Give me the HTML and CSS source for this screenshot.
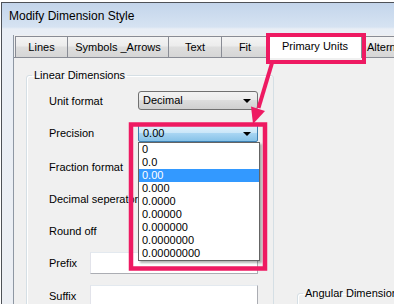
FILE: index.html
```html
<!DOCTYPE html>
<html lang="en">
<head>
    <meta charset="UTF-8">
    <meta name="viewport" content="width=device-width, initial-scale=1.0">
    <title>Modify Dimension Style</title>
    <link rel="stylesheet" href="styles.css">
</head>
<body>
    <div class="window">
        <div class="titlebar">Modify Dimension Style</div>
        <div class="frame">
            <div class="client">
                <div class="tabs">
                    <div class="tab tab-lines">Lines</div>
                    <div class="tab tab-symbols">Symbols _Arrows</div>
                    <div class="tab tab-text">Text</div>
                    <div class="tab tab-fit">Fit</div>
                    <div class="tab tab-primary active">Primary Units</div>
                    <div class="tab tab-alt">Alternate Units</div>
                </div>

                <div class="panel">
                    <fieldset class="group group-linear">
                        <legend>Linear Dimensions</legend>

                        <div class="row row-1">
                            <label class="lbl">Unit format</label>
                            <div class="combo">
                                <span>Decimal</span>
                                <span class="caret"></span>
                            </div>
                        </div>

                        <div class="row row-2">
                            <label class="lbl">Precision</label>
                            <div class="combo open">
                                <span>0.00</span>
                                <span class="caret"></span>
                                <ul class="droplist">
                                    <li>0</li>
                                    <li>0.0</li>
                                    <li class="selected">0.00</li>
                                    <li>0.000</li>
                                    <li>0.0000</li>
                                    <li>0.00000</li>
                                    <li>0.000000</li>
                                    <li>0.0000000</li>
                                    <li>0.00000000</li>
                                </ul>
                            </div>
                        </div>

                        <div class="row row-3">
                            <label class="lbl">Fraction format</label>
                        </div>

                        <div class="row row-4">
                            <label class="lbl">Decimal seperator</label>
                        </div>

                        <div class="row row-5">
                            <label class="lbl">Round off</label>
                        </div>

                        <div class="row row-6">
                            <label class="lbl short">Prefix</label>
                            <input type="text" class="textbox">
                        </div>

                        <div class="row row-7">
                            <label class="lbl short">Suffix</label>
                            <input type="text" class="textbox">
                        </div>
                    </fieldset>

                    <fieldset class="group group-angular">
                        <legend>Angular Dimensions</legend>
                    </fieldset>
                </div>
            </div>
        </div>
    </div>

    <!-- annotation layer: highlight boxes and arrow -->
    <svg class="callouts" width="394" height="304" viewBox="0 0 394 304">
        <rect x="268" y="35" width="96" height="27" fill="none" stroke="#ee1a62" stroke-width="4"/>
        <rect x="131" y="124.5" width="134" height="144" fill="none" stroke="#ee1a62" stroke-width="4.5"/>
        <line x1="272" y1="63" x2="258.5" y2="108" stroke="#ee1a62" stroke-width="4"/>
        <polygon points="253,124 251,106.5 265,111" fill="#ee1a62"/>
    </svg>
</body>
</html>
```

FILE: styles.css
```css
body {
    margin: 0;
    width: 394px;
    height: 304px;
    overflow: hidden;
    position: relative;
    background-color: #fff;
    font-family: "Liberation Sans", Arial, sans-serif;
    font-size: 11px;
    color: #000;
}
.window {
    margin: 2px 0 0 1px;
    width: 392px;
    height: 301px;
    overflow: hidden;
    border-left: 1px solid #4e5258;
    border-top: 1px solid #4e5258;
    background: linear-gradient(#c3d5eb, #d6e3f2 24px, #e9eef5 26px, #eceff4);
}
.titlebar {
    height: 24px;
    padding-left: 7px;
    line-height: 26px;
    font-size: 12px;
}
.frame {
    padding: 8px 0 0 11px;
}
.client {
    height: 270px;
    border-left: 1px solid #8e97a3;
    background-color: #f0f0f0;
    overflow: hidden;
}
.tabs {
    display: flex;
    align-items: flex-end;
    height: 22px;
    padding-left: 1px;
    position: relative;
    z-index: 1;
}
.tab {
    flex: none;
    box-sizing: border-box;
    height: 21px;
    margin-right: -1px;
    border: 1px solid #898c95;
    border-bottom: none;
    background: linear-gradient(#f4f4f4, #ececec 45%, #dedede 50%, #d6d6d6);
    text-align: center;
    line-height: 20px;
    white-space: nowrap;
    overflow: hidden;
}
.tab-lines { width: 53px; }
.tab-symbols { width: 102px; }
.tab-text { width: 54px; }
.tab-fit { width: 48px; }
.tab-primary { width: 94px; }
.tab-alt { width: 90px; text-align: left; padding-left: 5px; }
.tab.active {
    height: 24px;
    margin-bottom: -1px;
    background: #fff;
    line-height: 22px;
}
.panel {
    display: flex;
    align-items: flex-start;
    height: 260px;
    padding: 17px 0 0 12px;
    border-top: 1px solid #898c95;
}
.group {
    margin: 0;
    padding: 0;
    border: 1px solid #d5dfe5;
    border-radius: 3px;
    box-shadow: inset 1px 1px 0 #fff;
}
.group legend {
    margin-left: 5px;
    padding: 0 2px;
    line-height: 14px;
}
.group-linear {
    flex: none;
    width: 248px;
    height: 260px;
    margin-top: -7px;
    padding-top: 3px;
    box-sizing: border-box;
}
.group-angular {
    flex: none;
    width: 120px;
    height: 40px;
    margin: 211px 0 0 23px;
}
.row {
    display: flex;
    align-items: center;
    padding-left: 22px;
}
.row-1 { height: 31px; }
.row-2 { height: 34px; }
.row-3 { height: 33px; }
.row-4 { height: 31px; }
.row-5 { height: 33px; }
.row-6 { height: 32px; }
.row-7 { height: 33px; }
.lbl {
    width: 89px;
    flex: none;
    white-space: nowrap;
}
.lbl.short {
    width: 41px;
}
.combo {
    position: relative;
    box-sizing: border-box;
    width: 120px;
    height: 19px;
    padding-left: 4px;
    border: 1px solid #707070;
    border-radius: 3px;
    background: linear-gradient(#f2f2f2, #ebebeb 50%, #dddddd 50%, #cfcfcf);
    line-height: 17px;
}
.caret {
    position: absolute;
    right: 6px;
    top: 7px;
    border-left: 4px solid transparent;
    border-right: 4px solid transparent;
    border-top: 4px solid #000;
}
.combo.open {
    height: 18px;
    border-color: #3c7fb1;
    border-radius: 2px;
    background: linear-gradient(#e4f3fc, #c9e6f8 50%, #a9d6f3 51%, #86c2e8);
}
.droplist {
    position: absolute;
    top: 17px;
    left: -1px;
    width: 120px;
    margin: 0;
    padding: 0;
    list-style: none;
    border: 1px solid #646464;
    background-color: #fff;
    box-shadow: 2px 2px 2px rgba(0, 0, 0, 0.3);
    z-index: 2;
}
.droplist li {
    height: 13px;
    padding-left: 3px;
    line-height: 13px;
}
.droplist li.selected {
    background-color: #3399ff;
    color: #fff;
}
.textbox {
    flex: none;
    box-sizing: border-box;
    width: 168px;
    height: 22px;
    margin: 0;
    border: 1px solid #abadb3;
    border-top-color: #e3e9ef;
    border-left-color: #e2e3ea;
    background-color: #fff;
}
.callouts {
    position: absolute;
    left: 0;
    top: 0;
    z-index: 3;
}
```
